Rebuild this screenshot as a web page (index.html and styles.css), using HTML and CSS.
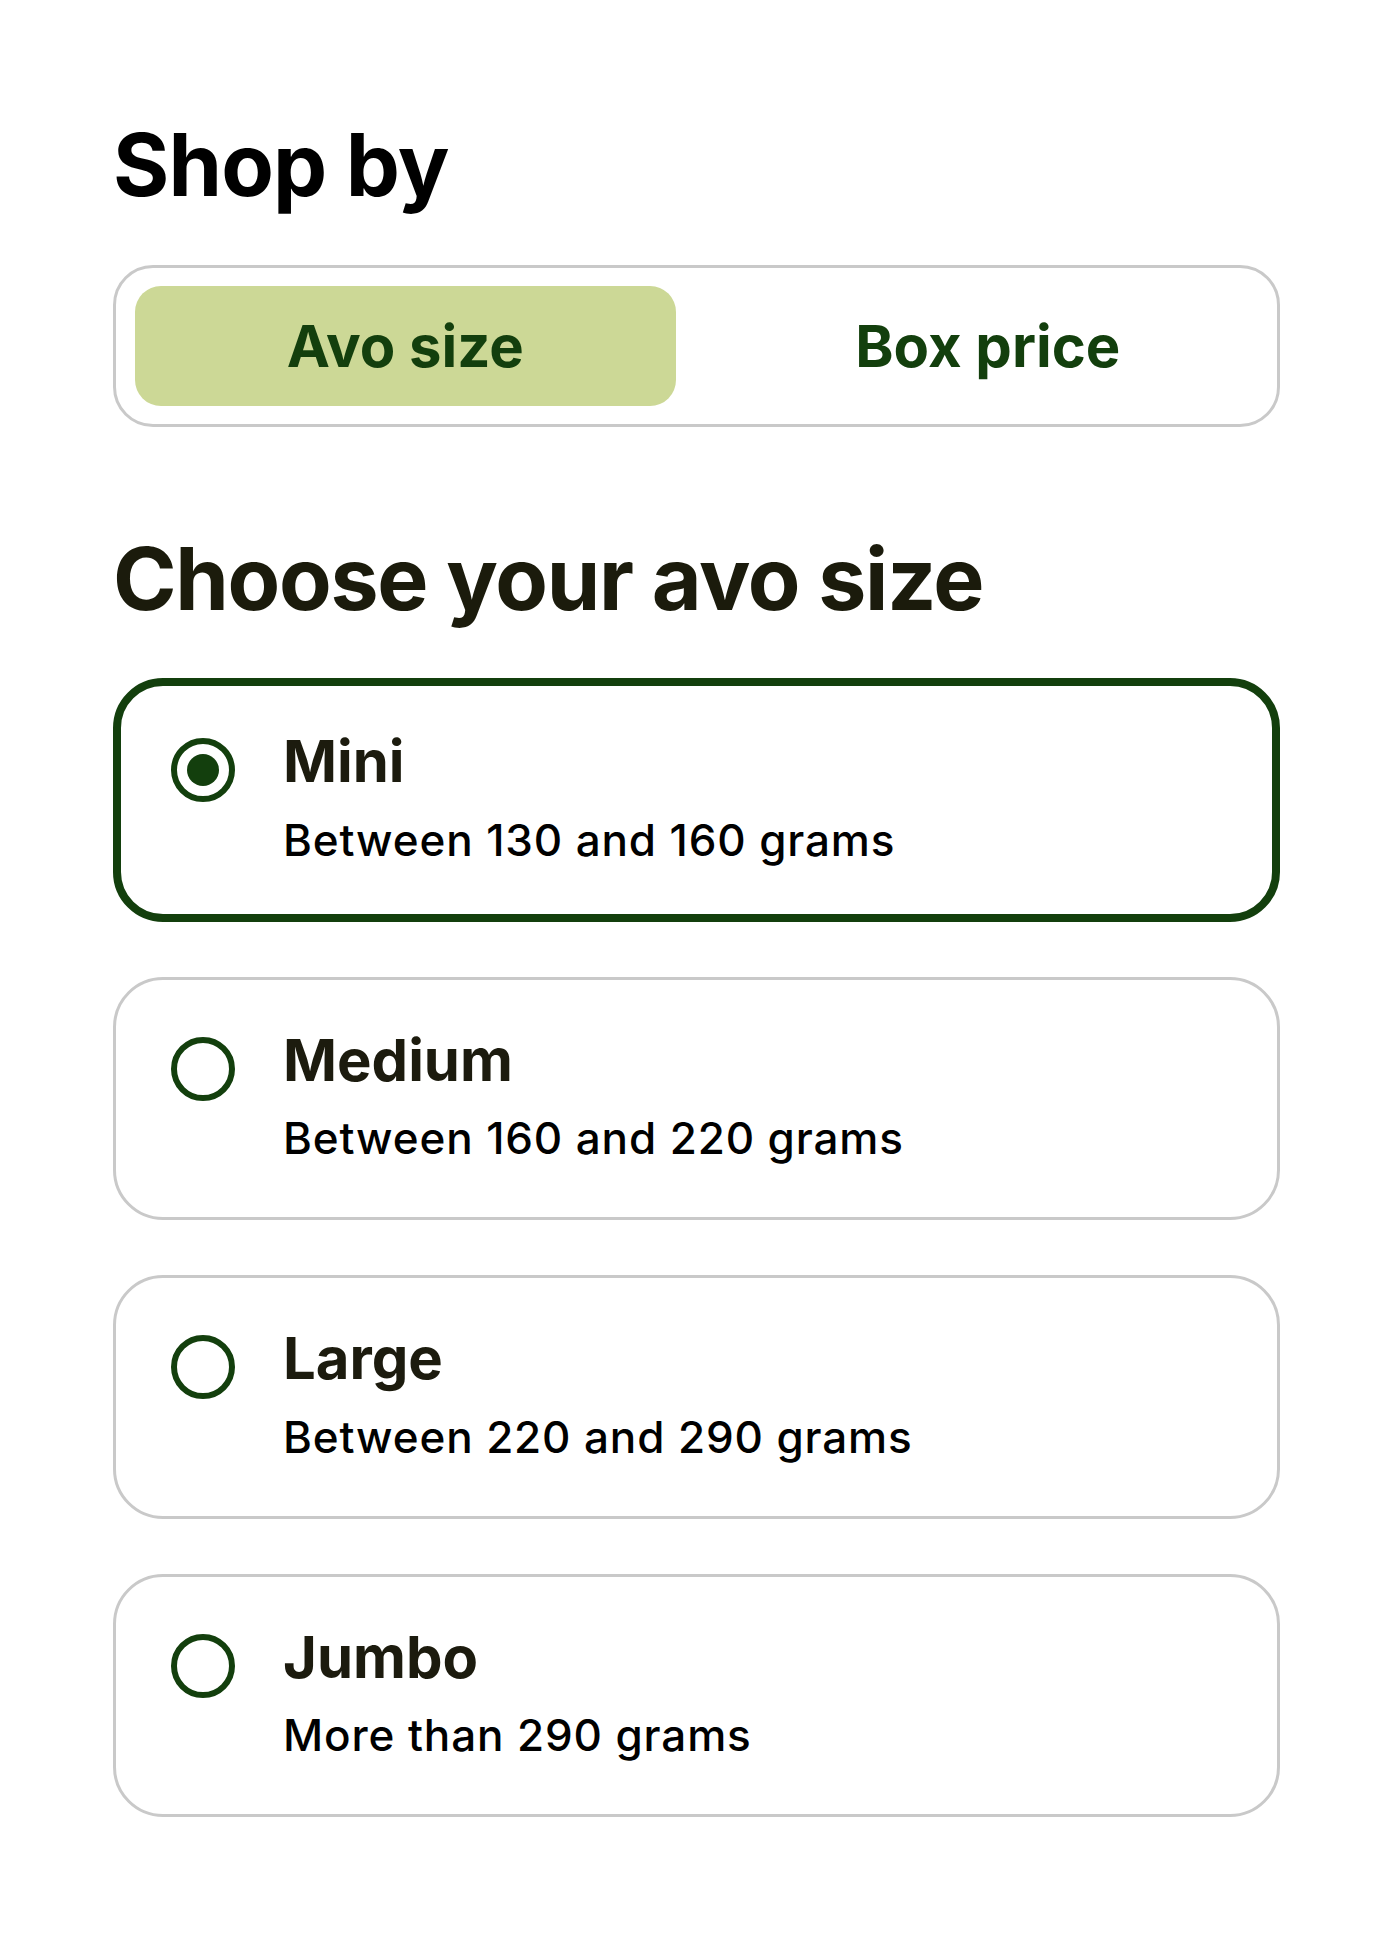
FILE: index.html
```html
<!DOCTYPE html>
<html lang="en">
<head>
<meta charset="utf-8">
<title>Shop by</title>
<link rel="stylesheet" href="styles.css">
</head>
<body>
<main class="page">
  <h1 class="page-title">Shop by</h1>
  <div class="segmented" role="tablist">
    <button class="seg-tab is-active" role="tab" aria-selected="true">Avo size</button>
    <button class="seg-tab" role="tab" aria-selected="false">Box price</button>
  </div>

  <h2 class="section-title">Choose your avo size</h2>

  <div class="options" role="radiogroup">
    <label class="option is-selected">
      <span class="radio"><span class="radio-dot"></span></span>
      <span class="option-text">
        <span class="option-name">Mini</span>
        <span class="option-desc">Between 130 and 160 grams</span>
      </span>
    </label>
    <label class="option">
      <span class="radio"></span>
      <span class="option-text">
        <span class="option-name">Medium</span>
        <span class="option-desc">Between 160 and 220 grams</span>
      </span>
    </label>
    <label class="option">
      <span class="radio"></span>
      <span class="option-text">
        <span class="option-name">Large</span>
        <span class="option-desc">Between 220 and 290 grams</span>
      </span>
    </label>
    <label class="option">
      <span class="radio"></span>
      <span class="option-text">
        <span class="option-name">Jumbo</span>
        <span class="option-desc">More than 290 grams</span>
      </span>
    </label>
  </div>
</main>
</body>
</html>
```

FILE: styles.css
```css
* { box-sizing: border-box; }

html, body {
  margin: 0;
  padding: 0;
  background: #ffffff;
}

body {
  font-family: Inter, "Noto Sans", "Liberation Sans", sans-serif;
  color: #000;
}

.page {
  width: 1167px;
  margin-left: 113px;
  padding-top: 114px;
  padding-bottom: 80px;
}

.page-title {
  margin: 0;
  font-size: 86px;
  line-height: 1.2;
  font-weight: 700;
  letter-spacing: -0.01em;
  color: #000;
}

.segmented {
  margin-top: 48px;
  border: 3px solid #c9c9c9;
  border-radius: 40px;
  padding: 18px 19px;
  display: grid;
  grid-template-columns: 1fr 1fr;
  column-gap: 42px;
}

.seg-tab {
  height: 120px;
  border: 0;
  border-radius: 26px;
  background: transparent;
  font-family: inherit;
  font-size: 58px;
  font-weight: 700;
  letter-spacing: 0;
  color: #133f0d;
  padding: 0;
  cursor: pointer;
}

.seg-tab.is-active {
  background: #ccd896;
}

.section-title {
  margin: 101px 0 0;
  font-size: 86px;
  line-height: 1.2;
  font-weight: 700;
  letter-spacing: -0.015em;
  color: #1b1b0c;
}

.options {
  margin-top: 47px;
  display: flex;
  flex-direction: column;
  gap: 55px;
}

.option {
  display: flex;
  align-items: flex-start;
  gap: 48px;
  border: 3px solid #c9c9c9;
  border-radius: 50px;
  padding: 46px 40px 52px 55px;
  cursor: pointer;
}

.option.is-selected {
  border: 8px solid #133f0d;
  padding: 41px 35px 47px 50px;
}

.radio {
  flex: none;
  width: 64px;
  height: 64px;
  margin-top: 11px;
  border: 6px solid #133f0d;
  border-radius: 50%;
  display: flex;
  align-items: center;
  justify-content: center;
}

.radio-dot {
  width: 32px;
  height: 32px;
  border-radius: 50%;
  background: #133f0d;
}

.option-text {
  display: flex;
  flex-direction: column;
  gap: 17px;
}

.option-name {
  font-size: 58px;
  line-height: 1.2;
  font-weight: 700;
  letter-spacing: 0;
  color: #1c1b0e;
}

.option-desc {
  font-size: 44px;
  line-height: 1.2;
  font-weight: 500;
  letter-spacing: 0.02em;
  color: #000;
}
```
